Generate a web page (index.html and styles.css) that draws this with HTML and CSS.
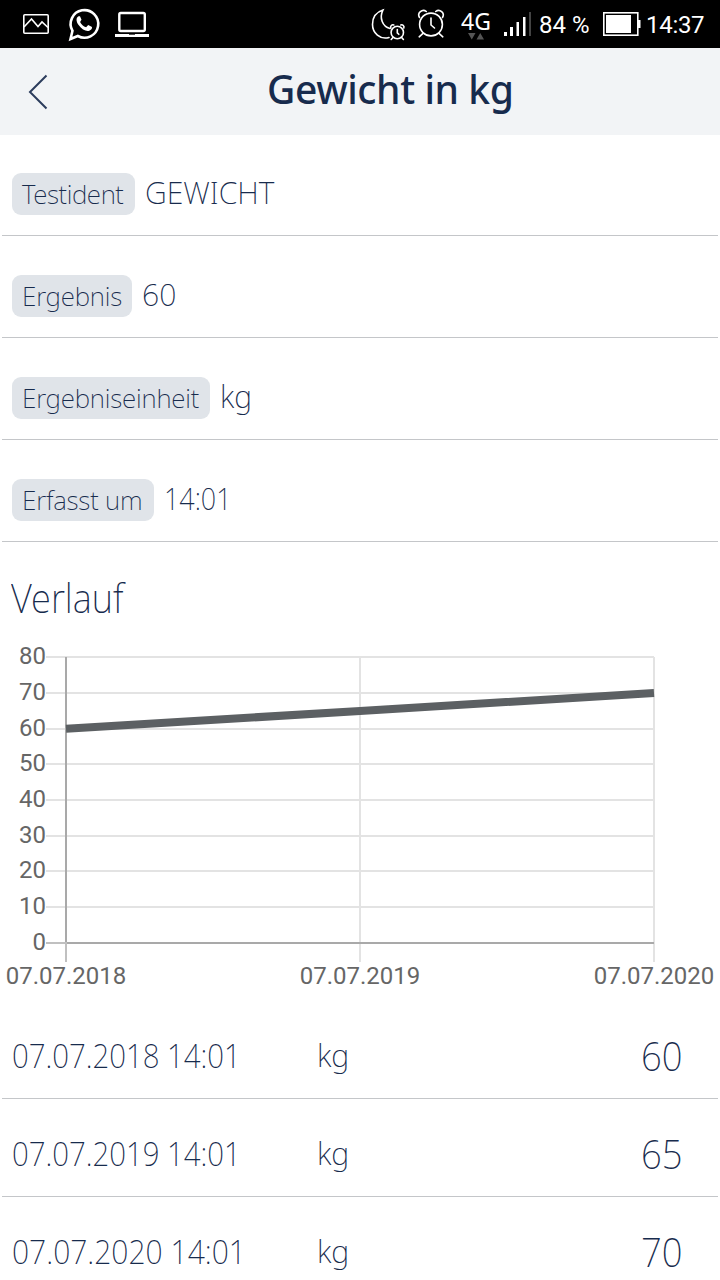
FILE: index.html
```
<!DOCTYPE html>
<html lang="de">
<head>
  <meta charset="UTF-8">
  <meta name="viewport" content="width=device-width, initial-scale=1.0">
  <title>Gewicht in kg</title>
  <link rel="stylesheet" href="styles.css">
</head>
<body>
  <!-- Android status bar -->
  <div class="status-bar">
    <svg class="status-icons" width="160" height="48" viewBox="0 0 160 48">
      <g fill="none" stroke="#fff" stroke-width="1.6">
        <rect x="23.8" y="14.8" width="24.4" height="18.4" rx="1"/>
        <path d="M24 27l7.500-8 6.500 7.500 4-4.500 6 5.500"/>
      </g>
      <path d="M70.500 39l2-8.200a13.800 13.800 0 1 1 5.300 5.200z" fill="none" stroke="#fff" stroke-width="2.600"/>
      <path d="M78.500 16.200c-2.800 1.500-2.400 5.300.1 8.800 3.200 4.500 7.500 6.700 10.700 5.700 1.800-.6 3-2 2.700-3.700l-3.800-2-2.100 2.300c-2.800-1-4.700-2.900-6-5.400l1.400-2.100-1.500-3.600z" fill="#fff"/>
      <rect x="119.300" y="13" width="25.500" height="18" rx="1.500" fill="none" stroke="#fff" stroke-width="2.400"/>
      <path d="M115 34h34v3h-34z" fill="#fff"/>
      <path d="M129 34h6v1h-6z" fill="#555"/>
    </svg>
    <svg class="status-icons" width="90" height="48" viewBox="365 0 90 48">
      <g fill="none" stroke="#fff" stroke-width="1.600" stroke-linecap="round">
        <path d="M389 37.500C380 40 372.500 33 372.500 24.500c0-7 4-12.500 10.500-14.500-4 8-.5 16.500 7 18.500"/>
        <circle cx="397.300" cy="32.500" r="6.200"/>
        <path d="M397.300 29.500v3.300l1.500 1.500M390.800 28a2.300 2.300 0 0 1 3-3M403.800 28a2.300 2.300 0 0 0-3-3M393 37.500l-1.800 2M401.600 37.500l1.800 2"/>
        <circle cx="431" cy="24.500" r="11.400"/>
        <path d="M431 18v7l3.500 3M419.500 17.500a4.600 4.600 0 0 1 6.800-6M442.500 17.500a4.600 4.600 0 0 0-6.800-6M423 33.300l-3.800 3.500M439 33.300l3.800 3.500"/>
      </g>
    </svg>
    <div class="network">
      <span>4G</span>
      <svg width="16" height="7" viewBox="0 0 16 7"><path d="M0 0h7.500L3.750 6.500zM8.500 6.500H16L12.250 0z" fill="#555"/></svg>
    </div>
    <svg class="signal" width="28" height="48" viewBox="503 0 28 48">
      <path d="M504 32h3v4h-3zM510 27h3v9h-3zM516.500 22h2.500v14h-2.500zM523 17h2.500v19H523z" fill="#fff"/>
      <path d="M529 12h2.500v24H529z" fill="#444"/>
    </svg>
    <span class="percent">84 %</span>
    <svg class="battery" width="38" height="48" viewBox="603 0 38 48">
      <rect x="603.800" y="12.800" width="34" height="22.400" fill="none" stroke="#fff" stroke-width="1.600"/>
      <path d="M606 15h25v18h-25zM638 20h2.500v8H638z" fill="#fff"/>
    </svg>
    <span class="clock">14:37</span>
  </div>

  <header class="header">
    <svg class="back" width="22" height="38" viewBox="0 0 22 38">
      <path d="M18.500 2.500L2 19l16.500 16.500" fill="none" stroke="#2c3c5c" stroke-width="2"/>
    </svg>
    <h1>Gewicht in kg</h1>
  </header>

  <main>
    <div class="row"><span class="label l-ident">Testident</span><span class="value">GEWICHT</span></div>
    <div class="row"><span class="label l-result">Ergebnis</span><span class="value">60</span></div>
    <div class="row"><span class="label l-unit">Ergebniseinheit</span><span class="value">kg</span></div>
    <div class="row"><span class="label l-time">Erfasst um</span><span class="value time">14:01</span></div>

    <h2>Verlauf</h2>

    <svg class="chart" width="720" height="360" viewBox="0 640 720 360">
      <!-- grid -->
      <path d="M46 657h608M46 693h608M46 729h608M46 764h608M46 800h608M46 836h608M46 871h608M46 907h608M360 657v305M654 657v305" stroke="#000" stroke-opacity=".11" stroke-width="2"/>
      <!-- axes -->
      <path d="M66 657v285M66 943h588" stroke="#a9a9a9" stroke-width="2"/>
      <path d="M46 943h20M66 942v20" stroke="#c0c0c0" stroke-width="2"/>
      <path d="M66 728.700L360 711l294-18" fill="none" stroke="#5c6063" stroke-width="8"/>
      <g class="y-labels">
        <text x="46" y="664">80</text>
        <text x="46" y="700">70</text>
        <text x="46" y="736">60</text>
        <text x="46" y="771">50</text>
        <text x="46" y="807">40</text>
        <text x="46" y="843">30</text>
        <text x="46" y="878">20</text>
        <text x="46" y="914">10</text>
        <text x="46" y="950">0</text>
      </g>
      <g class="x-labels">
        <text x="66" y="984">07.07.2018</text>
        <text x="360" y="984">07.07.2019</text>
        <text x="654" y="984">07.07.2020</text>
      </g>
    </svg>

    <div class="entry"><span class="date">07.07.2018 14:01</span><span class="unit">kg</span><span class="amount">60</span></div>
    <div class="entry"><span class="date">07.07.2019 14:01</span><span class="unit">kg</span><span class="amount">65</span></div>
    <div class="entry"><span class="date">07.07.2020 14:01</span><span class="unit">kg</span><span class="amount">70</span></div>
  </main>
</body>
</html>
```
FILE: styles.css
```
/* Base */
* {
  box-sizing: border-box;
}
body {
  margin: 0;
  width: 720px;
  height: 1280px;
  overflow: hidden;
  background: #fff;
  color: #172b4d;
  font-family: "Noto Sans", "Open Sans", sans-serif;
  font-weight: 200;
}
h1, h2 {
  margin: 0;
}

/* Status bar */
.status-bar {
  display: flex;
  height: 48px;
  background: #000;
  color: #fff;
  font-family: Roboto, sans-serif;
  font-weight: 400;
  font-size: 24px;
  line-height: 50px;
  white-space: nowrap;
}
.status-icons:nth-child(2) {
  margin-left: 205px;
}
.network {
  display: flex;
  flex-direction: column;
  align-items: center;
  width: 34px;
  margin-left: 4px;
  padding-top: 10px;
  font-family: "Noto Sans", sans-serif;
  font-size: 23px;
  line-height: 23px;
}
.signal {
  margin-left: 10px;
}
.percent {
  width: 64px;
  margin-left: 8px;
}
.clock {
  margin-left: 5px;
  letter-spacing: -0.3px;
}

/* Header */
.header {
  display: flex;
  align-items: center;
  height: 87px;
  padding-left: 28px;
  background: #f2f4f6;
}
.header h1 {
  margin-left: 217px;
  padding-bottom: 6px;
  font-size: 39px;
  font-weight: 550;
  letter-spacing: -0.4px;
  line-height: 50px;
}

/* Details */
.row {
  display: flex;
  height: 102px;
  margin: 0 2px;
  padding: 39px 10px 0;
  border-bottom: 1px solid #c4c6c9;
}
.row:first-child {
  height: 101px;
  padding-top: 38px;
}
.label {
  height: 42px;
  padding: 0 10px;
  border-radius: 9px;
  background: #e0e4e9;
  font-size: 26px;
  letter-spacing: -0.2px;
  line-height: 43px;
  white-space: nowrap;
}
.l-ident {
  width: 123px;
  letter-spacing: -0.4px;
}
.l-result {
  width: 120px;
}
.l-unit {
  width: 198px;
}
.l-time {
  width: 142px;
}
.value {
  margin-left: 10px;
  font-size: 32px;
  line-height: 38px;
  transform: scaleX(0.94);
  transform-origin: left;
}
.time {
  transform: scaleX(0.84);
}

/* History */
h2 {
  height: 98px;
  padding: 28px 0 0;
  margin-left: 11px;
  font-size: 40px;
  font-weight: 200;
  line-height: 55px;
  transform: scaleX(0.91);
  transform-origin: left;
}
.chart {
  display: block;
}
.chart text {
  fill: #666;
  font-family: Roboto, sans-serif;
  font-size: 24px;
  font-weight: 400;
}
.y-labels {
  text-anchor: end;
}
.x-labels {
  text-anchor: middle;
}
.entry {
  display: grid;
  grid-template-columns: 305px 1fr auto;
  height: 98px;
  margin: 0 2px;
  padding: 27px 35px 0 10px;
  border-bottom: 1px solid #c4c6c9;
  line-height: 54px;
  white-space: nowrap;
}
.chart + .entry {
  height: 99px;
  padding-top: 28px;
}
.date {
  font-size: 34px;
  transform: scaleX(0.864);
  transform-origin: left;
}
.entry:last-child .date {
  transform: scaleX(0.883);
}
.unit {
  font-size: 32px;
  transform: scaleX(0.95);
  transform-origin: left;
}
.amount {
  font-size: 40px;
  line-height: 55px;
  transform: scaleX(0.91);
  transform-origin: right;
}
```
